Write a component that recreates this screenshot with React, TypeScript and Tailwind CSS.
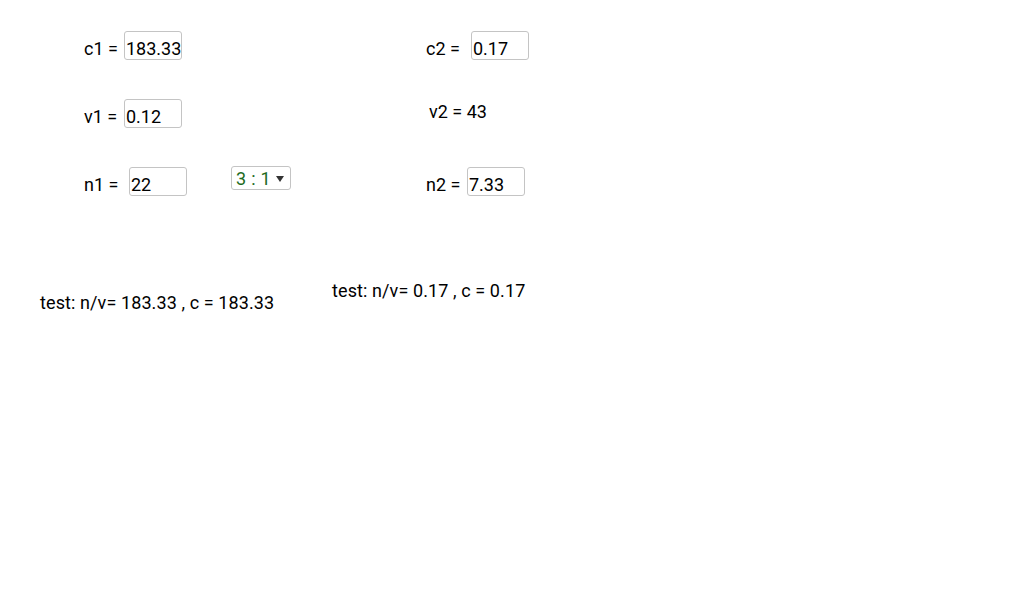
import React from "react";

type FieldProps = {
  label: string;
  value: string;
  labelWidth: string;
};

function Field({ label, value, labelWidth }: FieldProps) {
  return (
    <div className="flex items-center">
      <span className={`whitespace-pre pt-[6px] leading-none ${labelWidth}`}>{label}</span>
      <div className="flex h-[29px] w-[58px] items-center rounded-[3px] border border-[#c4c4c4] bg-white pl-[1px] pt-[6px] leading-none">
        {value}
      </div>
    </div>
  );
}

export default function App() {
  return (
    <div className="h-[598px] w-[1024px] overflow-hidden bg-white font-['Roboto',sans-serif] text-[18px] text-black">
      <div className="flex flex-col gap-[39px] pl-[84px] pt-[31px]">
        <div className="flex">
          <div className="w-[342px]">
            <Field label="c1 =" value="183.33" labelWidth="w-[40px]" />
          </div>
          <Field label="c2 =" value="0.17" labelWidth="w-[45px]" />
        </div>

        <div className="flex h-[29px] items-center">
          <div className="w-[342px]">
            <Field label="v1 =" value="0.12" labelWidth="w-[40px]" />
          </div>
          <span className="ml-[3px] pb-[3px] leading-none">v2 = 43</span>
        </div>

        <div className="flex">
          <div className="flex w-[342px] items-start">
            <Field label="n1 =" value="22" labelWidth="w-[45px]" />
            <div className="ml-[44px] mt-[-1px] flex h-[24px] w-[60px] items-center justify-between rounded-[3px] border border-[#c4c4c4] bg-white pl-[4px] pr-[6px] pt-[1px]">
              <span className="leading-none tracking-[0.3px] text-[#1e6b1e]">3 : 1</span>
              <svg width="8" height="6" viewBox="0 0 8 6">
                <path d="M0 0 L8 0 L4 6 Z" fill="#333" />
              </svg>
            </div>
          </div>
          <Field label="n2 =" value="7.33" labelWidth="w-[41px]" />
        </div>
      </div>

      <div className="flex items-start pl-[40px] pt-[83px] leading-6">
        <div className="mt-[12px] w-[292px] tracking-[0.1px]">test: n/v= 183.33 , c = 183.33</div>
        <div className="tracking-[0.1px]">test: n/v= 0.17 , c = 0.17</div>
      </div>
    </div>
  );
}
